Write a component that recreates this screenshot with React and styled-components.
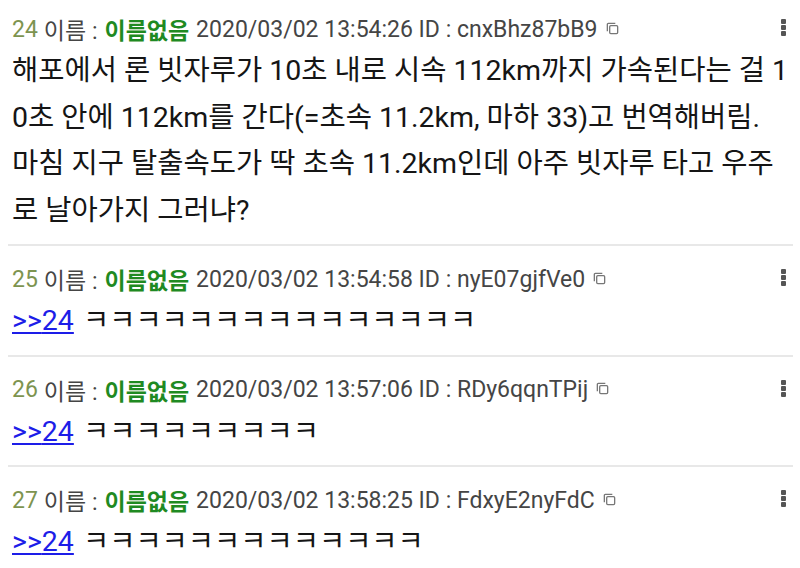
import React from 'react';
import styled, { createGlobalStyle } from 'styled-components';

const GlobalStyle = createGlobalStyle`
    html, body { margin: 0; padding: 0; background: #fff; }
    body {
        font-family: Roboto, "Noto Sans CJK KR", sans-serif;
        overflow: hidden;
    }
`

const ThreadList = styled.ul`
    list-style: none;
    margin: -4px 0 0;
    padding: 0 7px 0 8px;
`

const Post = styled.li`
    position: relative;
    padding: 18px 4px 10px 4px;
    border-bottom: 2px solid #e8e8e8;
`

const PostHead = styled.div`
    display: flex;
    align-items: center;
    height: 30px;
    font-size: 23px;
    color: #454545;
    white-space: nowrap;
    .num { color: #7d9450; margin-right: 6px; }
    .name { color: #1f8a22; font-weight: 700; margin: 0 7px; }
`

const CopyIcon = styled.svg`
    width: 15px;
    height: 15px;
    margin-left: 7px;
    margin-top: -2px;
`

const MoreButton = styled.span`
    position: absolute;
    right: 7px;
    top: 23px;
    display: flex;
    flex-direction: column;
    gap: 1px;
    i {
        display: block;
        width: 5px;
        height: 5px;
        border-radius: 1px;
        background: #555;
    }
`

const PostBody = styled.div`
    margin-top: 4px;
    font-size: 28.5px;
    line-height: 46.5px;
    color: #151515;
    .line { display: block; white-space: pre; }
    a { color: #1d1de8; text-decoration: underline; margin-right: 2px; }
`

const posts = [
    {
        no: 24, date: '2020/03/02 13:54:26', id: 'cnxBhz87bB9',
        lines: [
            '해포에서 론 빗자루가 10초 내로 시속 112km까지 가속된다는 걸 1',
            '0초 안에 112km를 간다(=초속 11.2km, 마하 33)고 번역해버림.',
            '마침 지구 탈출속도가 딱 초속 11.2km인데 아주 빗자루 타고 우주',
            '로 날아가지 그러냐?',
        ],
    },
    { no: 25, date: '2020/03/02 13:54:58', id: 'nyE07gjfVe0', anchor: 24, lines: ['ㅋ'.repeat(15)] },
    { no: 26, date: '2020/03/02 13:57:06', id: 'RDy6qqnTPij', anchor: 24, lines: ['ㅋ'.repeat(9)] },
    { no: 27, date: '2020/03/02 13:58:25', id: 'FdxyE2nyFdC', anchor: 24, lines: ['ㅋ'.repeat(13)] },
]

const App = () => {
    return (
        <>
            <GlobalStyle />
            <ThreadList>
                {
                    posts.map((item) => (
                        <Post key={item.no}>
                            <PostHead>
                                <span className="num">{item.no}</span>
                                <span>이름 :</span>
                                <span className="name">이름없음</span>
                                <span>{item.date} ID : {item.id}</span>
                                <CopyIcon viewBox="0 0 16 16" fill="none" stroke="#777" strokeWidth="1.4">
                                    <path d="M2.5 11V3.5a1 1 0 0 1 1-1H11" />
                                    <rect x="5" y="5" width="8.5" height="8.5" rx="1.2" />
                                </CopyIcon>
                            </PostHead>
                            <MoreButton><i /><i /><i /></MoreButton>
                            <PostBody>
                                {
                                    item.lines.map((line, index) => (
                                        <span className="line" key={index}>
                                            {item.anchor && <><a href="#">&gt;&gt;{item.anchor}</a> </>}
                                            {line}
                                        </span>
                                    ))
                                }
                            </PostBody>
                        </Post>
                    ))
                }
            </ThreadList>
        </>
    );
};

export default App;
